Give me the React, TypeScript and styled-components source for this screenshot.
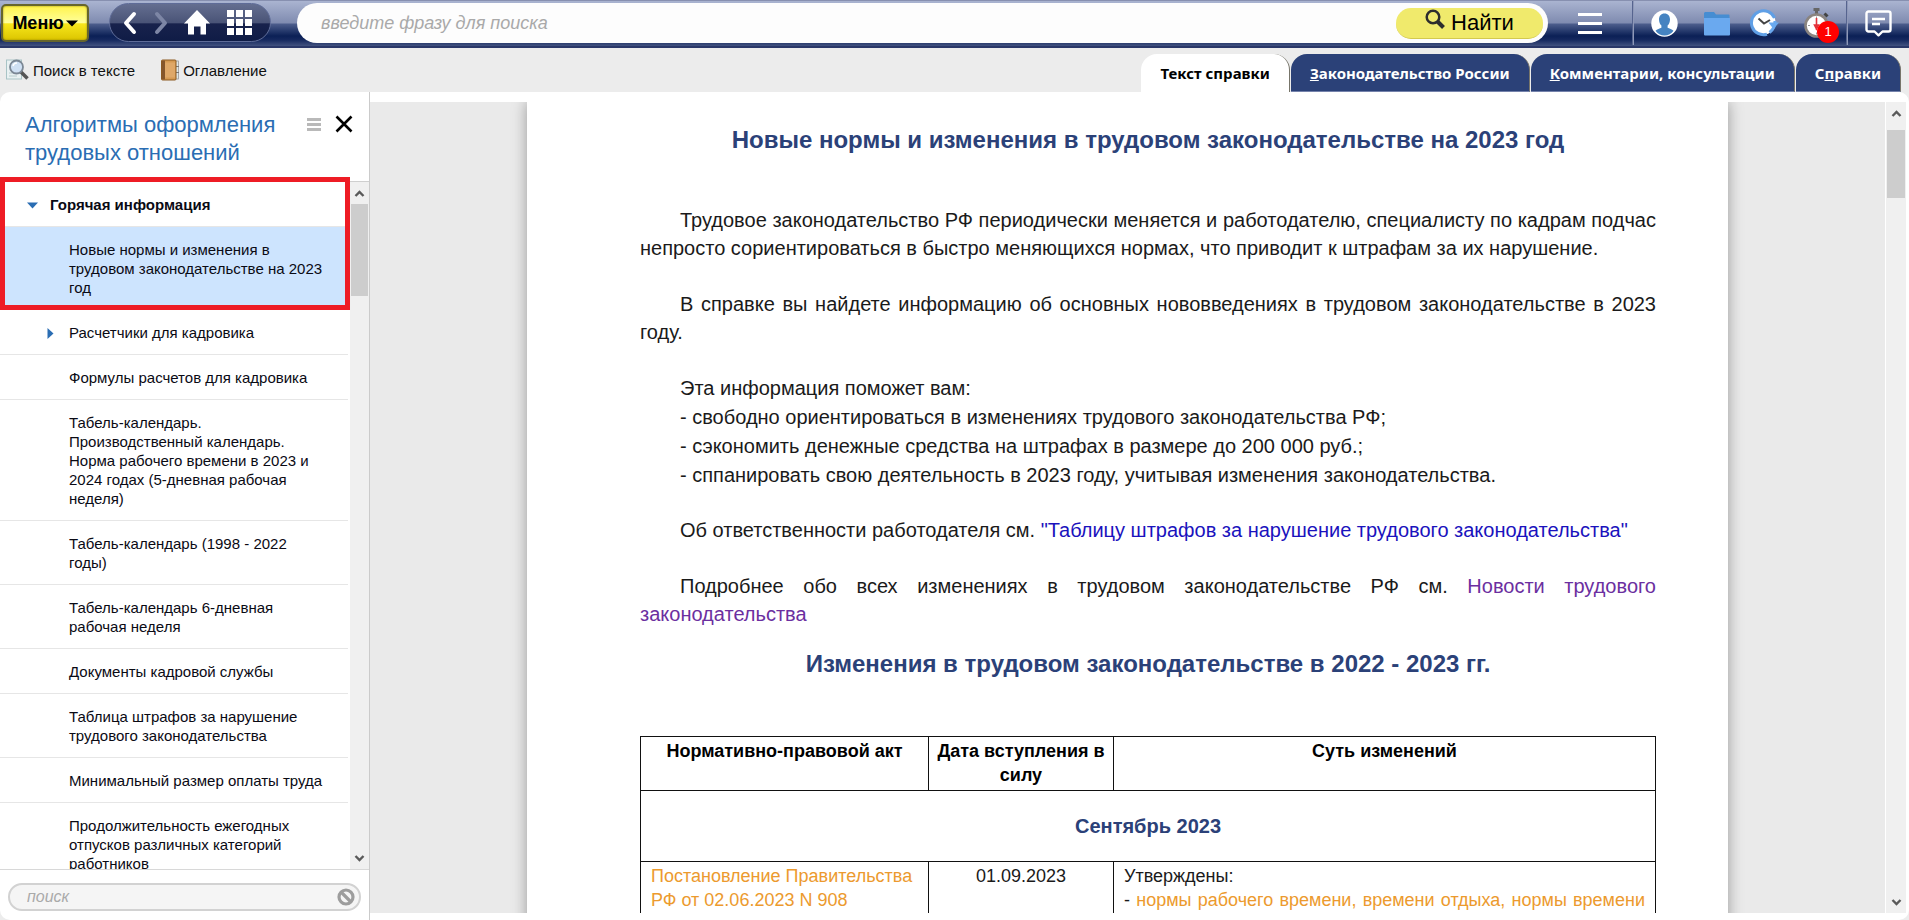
import React from 'react';
import styled, { createGlobalStyle, css } from 'styled-components';

const sans = `'Liberation Sans', Arial, sans-serif`;
const navy = '#2b4178';

const Global = createGlobalStyle`
  *, *::before, *::after { box-sizing: border-box; }
  body { margin: 0; font-family: ${sans}; color: #000; background: #ececec; }
  button, input { font-family: inherit; }
  button { border: 0; padding: 0; background: none; color: inherit; cursor: pointer; }
  a { text-decoration: none; color: inherit; }
  svg { display: block; flex: none; }
`;

const Shell = styled.div`
  display: flex;
  flex-direction: column;
  height: 100vh;
  overflow: hidden;
`;

/* ---------- top bar ---------- */
const TopBar = styled.header`
  display: flex;
  align-items: flex-start;
  flex: none;
  height: 48px;
  padding: 3px 0 0 1px;
  border-top: 1px solid #8790b0;
  border-bottom: 2px solid #2a3768;
  background: linear-gradient(#aab4d1 0, #7f8bb0 22px, #4c5d8c 23px, #0b2056 35px, #16295f 39px, #42527f 45px);
`;

const MenuButton = styled.button`
  flex: none;
  width: 88px;
  height: 38px;
  margin-right: 20px;
  display: flex;
  align-items: center;
  justify-content: center;
  gap: 2px;
  border: 2px solid #66652c;
  border-radius: 5px;
  background: linear-gradient(#fff34d 0, #ffff9c 50%, #f7e71c 52%, #dcc500 100%);
  box-shadow: inset 0 0 2px #8a7d00;
  font-size: 18px;
  font-weight: 700;
`;

const NavPill = styled.nav`
  flex: none;
  display: flex;
  align-items: center;
  justify-content: space-between;
  width: 162px;
  height: 39px;
  margin: -1px 26px 0 0;
  padding: 0 18px 0 13px;
  border: 1px solid #5f6c98;
  border-radius: 20px;
  background: linear-gradient(#646e90 0, #4a5477 50%, #18224c 54%, #0f1c46 100%);
`;

const Search = styled.form`
  display: flex;
  align-items: center;
  flex: 1;
  min-width: 0;
  height: 40px;
  margin-top: -1px;
  padding: 0 5px 0 24px;
  border-radius: 20px;
  background: #fdfdfd;
`;

const SearchInput = styled.input`
  flex: 1;
  min-width: 0;
  border: 0;
  outline: 0;
  padding: 0;
  background: transparent;
  font-size: 18px;
  font-style: italic;
  &::placeholder { color: #a9a9a9; opacity: 1; }
`;

const FindButton = styled.button`
  display: flex;
  align-items: center;
  justify-content: center;
  gap: 6px;
  width: 147px;
  height: 31px;
  border-radius: 15px;
  border-bottom: 1px solid #d3c94f;
  background: #f0ea6c;
  font-size: 22px;
  line-height: 32px;
  svg { margin-top: -8px; }
`;

const TopIcons = styled.div`
  display: flex;
  align-items: center;
  flex: none;
  height: 44px;
  margin-top: -3px;
`;

const IconButton = styled.button<{ $w: number }>`
  position: relative;
  width: ${p => p.$w}px;
  height: 44px;
  display: flex;
  align-items: center;
  justify-content: center;
`;

const Divider = styled.i`
  width: 2px;
  height: 44px;
  border-left: 1px solid #56648f;
  border-right: 1px solid #8e98b8;
`;

const Badge = styled.b`
  position: absolute;
  left: 29px;
  top: 20px;
  width: 22px;
  height: 22px;
  border-radius: 50%;
  background: #f00;
  color: #fff;
  font-size: 13px;
  font-weight: 400;
  line-height: 22px;
  text-align: center;
`;

/* ---------- tool row ---------- */
const ToolRow = styled.div`
  display: flex;
  align-items: flex-end;
  justify-content: space-between;
  flex: none;
  height: 44px;
  padding: 0 8px 0 5px;
`;

const Tools = styled.div`
  display: flex;
  align-self: stretch;
  align-items: center;
  gap: 26px;
`;

const Tool = styled.button`
  display: flex;
  align-items: center;
  gap: 4px;
  font-size: 15px;
  color: #111;
`;

const Tabs = styled.div`
  display: flex;
  align-items: flex-end;
  gap: 1px;
`;

const Tab = styled.button<{ $active?: boolean }>`
  height: 38px;
  padding: 0 19px;
  border-radius: 16px 16px 0 0;
  font: 700 15px/38px 'Noto Sans', sans-serif;
  color: ${p => (p.$active ? '#000' : '#fff')};
  background: ${p => (p.$active ? '#fff' : navy)};
  border-right: 1px solid #77756a;
  ${p => !p.$active && css`border-bottom: 1px solid #7482ab;`}
`;

/* ---------- body ---------- */
const Body = styled.div`
  display: flex;
  flex: 1;
  min-height: 0;
`;

const Sidebar = styled.aside`
  display: flex;
  flex-direction: column;
  flex: none;
  width: 370px;
  background: #fff;
  border-right: 1px solid #cbcbcb;
  border-radius: 10px 0 0 10px;
`;

const SideHead = styled.div`
  display: flex;
  align-items: flex-start;
  flex: none;
  height: 90px;
  padding: 19px 16px 0 25px;
  border-bottom: 1px solid #cfcfcf;
  h2 {
    flex: 1;
    margin: 0;
    font-size: 22px;
    line-height: 28px;
    font-weight: 400;
    color: #2a6db3;
  }
`;

const HeadButton = styled.button`
  display: flex;
  height: 26px;
  align-items: center;
  margin-left: 14px;
`;

const TreeArea = styled.div`
  display: flex;
  flex: 1;
  min-height: 0;
  position: relative;
  &::before {
    content: '';
    position: absolute;
    top: -5px;
    left: 0;
    width: 350px;
    height: 5px;
    background: #ee1c25;
    z-index: 1;
  }
`;

const Tree = styled.ul`
  flex: 1;
  min-width: 0;
  margin: 0;
  padding: 0;
  list-style: none;
  overflow: hidden;
`;

const TreeLink = styled.a<{ $root?: boolean; $selected?: boolean }>`
  display: flex;
  padding: 13px 0 12px;
  margin-right: 2px;
  border-bottom: 1px solid #e6e6e6;
  background: ${p => (p.$selected ? '#cde4fe' : '#fff')};
  font-size: 15px;
  line-height: 19px;
  font-weight: ${p => (p.$root ? 700 : 400)};
  color: #0a0a14;
  svg { margin: ${p => (p.$root ? '7px 0 0 27px' : '5px 0 0 47px')}; }
`;

const TreeText = styled.span<{ $pad: number }>`
  flex: 1;
  padding-left: ${p => p.$pad}px;
  padding-right: 22px;
`;

const RedFrame = styled.li`
  position: relative;
  &::after {
    content: '';
    position: absolute;
    inset: 0;
    border: 5px solid #ee1c25;
    border-top: 0;
    pointer-events: none;
  }
`;

const Plain = styled.ul`
  margin: 0;
  padding: 0;
  list-style: none;
`;

const ScrollTrack = styled.div<{ $w: number }>`
  display: flex;
  flex-direction: column;
  justify-content: space-between;
  align-items: center;
  flex: none;
  width: ${p => p.$w}px;
  padding: 7px 0 6px;
  background: #f0f0f0;
  position: relative;
`;

const ScrollThumb = styled.div<{ $h: number; $top: number }>`
  position: absolute;
  top: ${p => p.$top}px;
  left: 1px;
  right: 1px;
  height: ${p => p.$h}px;
  background: #cdcdcd;
`;

const SideFoot = styled.div`
  flex: none;
  height: 51px;
  padding: 13px 8px 0;
  border-top: 1px solid #d8d8d8;
`;

const FilterBox = styled.div`
  display: flex;
  align-items: center;
  height: 28px;
  padding: 0 4px 0 17px;
  border: 2px solid #d2d2d2;
  border-radius: 14px;
  background: #f5f5f5;
  input {
    flex: 1;
    min-width: 0;
    padding: 0;
    border: 0;
    outline: 0;
    background: transparent;
    font-size: 16px;
    font-style: italic;
  }
  input::placeholder { color: #aaa; opacity: 1; }
`;

/* ---------- document ---------- */
const Main = styled.main`
  display: flex;
  flex: 1;
  min-width: 0;
  padding: 10px 3px 7px 0;
  background: #fff;
  border-radius: 0 10px 10px 0;
`;

const Viewer = styled.div`
  flex: 1;
  min-width: 0;
  overflow: hidden;
  background: #eaeaea;
  border-right: 1px solid #fff;
`;

const Page = styled.article`
  max-width: 1201px;
  margin: 0 auto;
  padding: 24px 72px 0 113px;
  background: #fff;
  box-shadow: 0 0 14px rgba(0, 0, 0, 0.35);
  min-height: 100%;
`;

const Heading = styled.h1`
  margin: 0;
  font-size: 24px;
  line-height: 28px;
  font-weight: 700;
  text-align: center;
  color: ${navy};
`;

const Text = styled.div`
  margin: 52px 0 22px;
  font-size: 20px;
  line-height: 28px;
  color: #1a1a1a;
  text-align: justify;
  p { margin: 0 0 28px; text-indent: 40px; }
  p:last-child { margin-bottom: 0; }
`;

const Lines = styled.ul`
  margin: 0 0 26px;
  padding: 0 0 0 40px;
  list-style: none;
  line-height: 29px;
`;

const DocLink = styled.a<{ $tone: 'blue' | 'visited' | 'orange' }>`
  color: ${p => ({ blue: '#1a12bd', visited: '#6b2fa0', orange: '#ec9a2e' }[p.$tone])};
`;

const Table = styled.table`
  width: 100%;
  margin-top: 58px;
  table-layout: fixed;
  border-collapse: collapse;
  font-size: 18px;
  line-height: 24px;
  color: #1a1a1a;
  th, td { border: 1px solid #111; padding: 2px 10px; vertical-align: top; }
  th { height: 54px; padding: 2px 6px; font-weight: 700; color: #000; }
  th.month { height: 71px; vertical-align: middle; font-size: 20px; color: ${navy}; }
  td { height: 96px; }
  td.date { text-align: center; }
`;

const FullLine = styled.div`
  text-align: justify;
  text-align-last: justify;
`;

/* ---------- icons ---------- */
const Chevron = ({ color, flip }: { color: string; flip?: boolean }) => (
  <svg width="14" height="24" viewBox="0 0 14 24">
    <path d={flip ? 'M3 3l8 9-8 9' : 'M11 3l-8 9 8 9'} fill="none" stroke={color} strokeWidth="4" strokeLinecap="round" strokeLinejoin="round" />
  </svg>
);
const ScrollArrow = ({ down }: { down?: boolean }) => (
  <svg width="11" height="9" viewBox="0 0 11 9">
    <path d={down ? 'M1.5 2l4 4 4-4' : 'M1.5 7l4-4 4 4'} fill="none" stroke="#5a5a5a" strokeWidth="2.4" />
  </svg>
);
const HomeIcon = () => (
  <svg width="26" height="25" viewBox="0 0 26 25">
    <path d="M13 0L26 13.500H22V24.500H16.500V16.500H10V24.500H4V13.500H0z" fill="#fff" />
  </svg>
);
const GridIcon = () => (
  <svg width="25" height="25" viewBox="0 0 25 25" fill="#fff">
    {[0, 9, 18].map(y => [0, 9, 18].map(x => <rect key={`${x}-${y}`} x={x} y={y} width="7" height="7" />))}
  </svg>
);
const Magnifier = () => (
  <svg width="20" height="20" viewBox="0 0 20 20" fill="none" stroke="#2d2d2d">
    <circle cx="8" cy="8" r="6.300" strokeWidth="2.500" />
    <path d="M12.500 12.500l6 6" strokeWidth="4" />
  </svg>
);
const PageSearchIcon = () => (
  <svg width="24" height="22" viewBox="0 0 24 22">
    <rect x="1.500" y="1" width="15" height="19" fill="#e9f1f2" stroke="#a9c4c6" />
    <path d="M4 14h4M4 17h8" stroke="#b8cccc" />
    <path d="M16 13l6.500 6.500" stroke="#555" strokeWidth="3.500" />
    <circle cx="11.500" cy="8" r="6.500" fill="#cfe0f3" stroke="#7b8794" strokeWidth="1.800" />
    <path d="M8 7a4 4 0 0 1 4-3" stroke="#fff" strokeWidth="1.500" fill="none" />
  </svg>
);
const BookIcon = () => (
  <svg width="18" height="22" viewBox="0 0 18 22">
    <rect x="13" y="2" width="4.500" height="18" fill="#dfe8e8" stroke="#8d8d8d" strokeWidth=".7" />
    <path d="M15 7.500h3M15 13.500h3" stroke="#777" />
    <rect x=".5" y="1" width="14.500" height="20" rx="1" fill="#d59a52" stroke="#8c5a23" />
    <rect x="1" y="1.500" width="3" height="19" fill="#85562b" />
    <path d="M4 3.500h10v15H4z" fill="#dfa868" />
  </svg>
);
const Bars = ({ w, h, gap, color }: { w: number; h: number; gap: number; color: string }) => (
  <svg width={w} height={h * 3 + gap * 2} fill={color}>
    {[0, 1, 2].map(i => <rect key={i} y={i * (h + gap)} width={w} height={h} />)}
  </svg>
);
const UserIcon = () => (
  <svg width="27" height="27" viewBox="0 0 27 27">
    <circle cx="13.500" cy="13.500" r="13.200" fill="#fff" />
    <path d="M13.500 3.500c-3.500 0-5.500 2.600-5.500 6 0 2.600 1 4.700 2.400 6v2.200c-1.600.9-4.400 1.400-5.900 3 2 2.900 5.300 4.800 9 4.800s7-1.900 9-4.800c-1.500-1.600-4.300-2.100-5.900-3v-2.200c1.400-1.300 2.400-3.400 2.400-6 0-3.400-2-6-5.500-6z" fill="#4583c1" />
  </svg>
);
const FolderIcon = () => (
  <svg width="26" height="25" viewBox="0 0 26 25">
    <path d="M1 1h9l2 2.500h12.500a1 1 0 0 1 1 1V10H0V2z" fill="#468dd2" />
    <path d="M0 7h26v16.500a1 1 0 0 1-1 1H1a1 1 0 0 1-1-1z" fill="#6aa9ef" />
  </svg>
);
const HistoryIcon = () => (
  <svg width="29" height="28" viewBox="0 0 29 28">
    <circle cx="13.500" cy="13.500" r="12" fill="#fff" />
    <path d="M17 25.200A12 12 0 1 1 24.500 9" fill="none" stroke="#5f9fe6" strokeWidth="3" />
    <path d="M18.500 13.500H29L23.500 20z" fill="#6aa9ef" />
    <path d="M25 12c0 5-2 9-5.500 11.500" fill="none" stroke="#6aa9ef" strokeWidth="3" />
    <path d="M8.500 9.500l5.500 5 6-3.500" fill="none" stroke="#444" strokeWidth="2" />
  </svg>
);
const StopwatchIcon = () => (
  <svg width="26" height="31" viewBox="0 0 26 31">
    <path d="M9.500 1.500h6M12.500 1.500v5" stroke="#666" strokeWidth="3" />
    <path d="M20.500 5.500l3 3" stroke="#444" strokeWidth="3" />
    <circle cx="12.500" cy="17.500" r="11" fill="#fff" stroke="#8a8480" strokeWidth="2.600" />
    <path d="M12.500 8.500v2M12.500 24.500v2M4 17.500h2M19 17.500h2" stroke="#999" />
    <path d="M12.500 10v12M10.500 17h4l-2 4z" stroke="#e1323a" strokeWidth="1.600" fill="#e1323a" />
  </svg>
);
const ChatIcon = () => (
  <svg width="27" height="27" viewBox="0 0 27 27" fill="none" stroke="#fff" strokeWidth="2.400" strokeLinejoin="round">
    <path d="M3.500 1.500h20a2 2 0 0 1 2 2v16a2 2 0 0 1-2 2H17.500L13.500 25.300 9.500 21.500H3.500a2 2 0 0 1-2-2v-16a2 2 0 0 1 2-2z" />
    <path d="M7 9h13M7 14h8" />
  </svg>
);
const CloseIcon = () => (
  <svg width="18" height="18" viewBox="0 0 18 18">
    <path d="M1.500 1.500l15 15M16.500 1.500l-15 15" stroke="#000" strokeWidth="2.600" />
  </svg>
);
const ClearIcon = () => (
  <svg width="18" height="18" viewBox="0 0 18 18" fill="none" stroke="#9d9d9d" strokeWidth="3.200">
    <circle cx="9" cy="9" r="7" />
    <path d="M4 4l10 10" />
  </svg>
);
const Caret = () => (
  <svg width="12" height="7" viewBox="0 0 12 7"><path d="M0 .5h12L6 6.500z" fill="#000" /></svg>
);

/* ---------- data ---------- */
const items = [
  'Формулы расчетов для кадровика',
  'Табель-календарь. Производственный календарь. Норма рабочего времени в 2023 и 2024 годах (5-дневная рабочая неделя)',
  'Табель-календарь (1998 - 2022 годы)',
  'Табель-календарь 6-дневная рабочая неделя',
  'Документы кадровой службы',
  'Таблица штрафов за нарушение трудового законодательства',
  'Минимальный размер оплаты труда',
  'Продолжительность ежегодных отпусков различных категорий работников',
];

const Header = () => (
  <TopBar>
    <MenuButton>Меню<Caret /></MenuButton>
    <NavPill>
      <button aria-label="Назад"><Chevron color="#fff" /></button>
      <button aria-label="Вперед"><Chevron color="#7d86a5" flip /></button>
      <button aria-label="Домой"><HomeIcon /></button>
      <button aria-label="Разделы"><GridIcon /></button>
    </NavPill>
    <Search onSubmit={e => e.preventDefault()}>
      <SearchInput aria-label="Поиск" placeholder="введите фразу для поиска" />
      <FindButton type="submit"><Magnifier />Найти</FindButton>
    </Search>
    <TopIcons>
      <IconButton $w={84} aria-label="Список"><Bars w={24} h={3} gap={6} color="#fff" /></IconButton>
      <Divider />
      <IconButton $w={60} aria-label="Профиль"><UserIcon /></IconButton>
      <IconButton $w={46} aria-label="Папки"><FolderIcon /></IconButton>
      <IconButton $w={48} aria-label="История"><HistoryIcon /></IconButton>
      <IconButton $w={58} aria-label="На контроле"><StopwatchIcon /><Badge>1</Badge></IconButton>
      <Divider />
      <IconButton $w={61} aria-label="Сообщения"><ChatIcon /></IconButton>
    </TopIcons>
  </TopBar>
);

const Side = () => (
  <Sidebar>
    <SideHead>
      <h2>Алгоритмы оформления трудовых отношений</h2>
      <HeadButton aria-label="Меню раздела"><Bars w={14} h={3} gap={2} color="#b9b9b9" /></HeadButton>
      <HeadButton aria-label="Закрыть"><CloseIcon /></HeadButton>
    </SideHead>
    <TreeArea>
      <Tree>
        <RedFrame>
          <Plain>
            <li>
              <TreeLink href="#hot" $root>
                <svg width="11" height="7" viewBox="0 0 11 7"><path d="M0 .5h11L5.500 6.500z" fill="#2a6db3" /></svg>
                <TreeText $pad={12}>Горячая информация</TreeText>
              </TreeLink>
            </li>
            <li>
              <TreeLink href="#norms" $selected>
                <TreeText $pad={69}>Новые нормы и изменения в трудовом законодательстве на 2023 год</TreeText>
              </TreeLink>
            </li>
          </Plain>
        </RedFrame>
        <li>
          <TreeLink href="#calc">
            <svg width="7" height="11" viewBox="0 0 7 11"><path d="M.5 0v11L6.500 5.500z" fill="#2a6db3" /></svg>
            <TreeText $pad={15}>Расчетчики для кадровика</TreeText>
          </TreeLink>
        </li>
        {items.map((t, i) => (
          <li key={i}><TreeLink href={`#item-${i}`}><TreeText $pad={69}>{t}</TreeText></TreeLink></li>
        ))}
      </Tree>
      <ScrollTrack $w={19}>
        <ScrollArrow />
        <ScrollThumb $top={22} $h={92} />
        <ScrollArrow down />
      </ScrollTrack>
    </TreeArea>
    <SideFoot>
      <FilterBox>
        <input aria-label="Поиск по разделу" placeholder="поиск" />
        <button aria-label="Очистить"><ClearIcon /></button>
      </FilterBox>
    </SideFoot>
  </Sidebar>
);

const Document = () => (
  <Main>
    <Viewer>
      <Page>
        <Heading>Новые нормы и изменения в трудовом законодательстве на 2023 год</Heading>
        <Text>
          <p>
            Трудовое законодательство РФ периодически меняется и работодателю, специалисту по кадрам подчас
            непросто сориентироваться в быстро меняющихся нормах, что приводит к штрафам за их нарушение.
          </p>
          <p>В справке вы найдете информацию об основных нововведениях в трудовом законодательстве в 2023 году.</p>
          <Lines>
            <li>Эта информация поможет вам:</li>
            <li>- свободно ориентироваться в изменениях трудового законодательства РФ;</li>
            <li>- сэкономить денежные средства на штрафах в размере до 200 000 руб.;</li>
            <li>- сппанировать свою деятельность в 2023 году, учитывая изменения законодательства.</li>
          </Lines>
          <p>
            Об ответственности работодателя см.{' '}
            <DocLink href="#fines" $tone="blue">"Таблицу штрафов за нарушение трудового законодательства"</DocLink>
          </p>
          <p>
            Подробнее обо всех изменениях в трудовом законодательстве РФ см.{' '}
            <DocLink href="#news" $tone="visited">Новости трудового законодательства</DocLink>
          </p>
        </Text>
        <Heading as="h2">Изменения в трудовом законодательстве в 2022 - 2023 гг.</Heading>
        <Table>
          <colgroup><col width="288" /><col width="185" /><col /></colgroup>
          <thead>
            <tr><th>Нормативно-правовой акт</th><th>Дата вступления в силу</th><th>Суть изменений</th></tr>
          </thead>
          <tbody>
            <tr><th className="month" colSpan={3}>Сентябрь 2023</th></tr>
            <tr>
              <td><DocLink href="#act" $tone="orange">Постановление Правительства РФ от 02.06.2023 N 908</DocLink></td>
              <td className="date">01.09.2023</td>
              <td>
                Утверждены:
                <FullLine>
                  - <DocLink href="#time" $tone="orange">нормы рабочего времени, времени отдыха, нормы времени</DocLink>
                </FullLine>
              </td>
            </tr>
          </tbody>
        </Table>
      </Page>
    </Viewer>
    <ScrollTrack $w={20}>
      <ScrollArrow />
      <ScrollThumb $top={28} $h={68} />
      <ScrollArrow down />
    </ScrollTrack>
  </Main>
);

export default function App() {
  return (
    <Shell>
      <Global />
      <Header />
      <ToolRow>
        <Tools>
          <Tool><PageSearchIcon />Поиск в тексте</Tool>
          <Tool><BookIcon />Оглавление</Tool>
        </Tools>
        <Tabs role="tablist">
          <Tab role="tab" aria-selected $active>Текст справки</Tab>
          <Tab role="tab"><u>З</u>аконодательство России</Tab>
          <Tab role="tab"><u>К</u>омментарии, консультации</Tab>
          <Tab role="tab">С<u>п</u>равки</Tab>
        </Tabs>
      </ToolRow>
      <Body>
        <Side />
        <Document />
      </Body>
    </Shell>
  );
}
